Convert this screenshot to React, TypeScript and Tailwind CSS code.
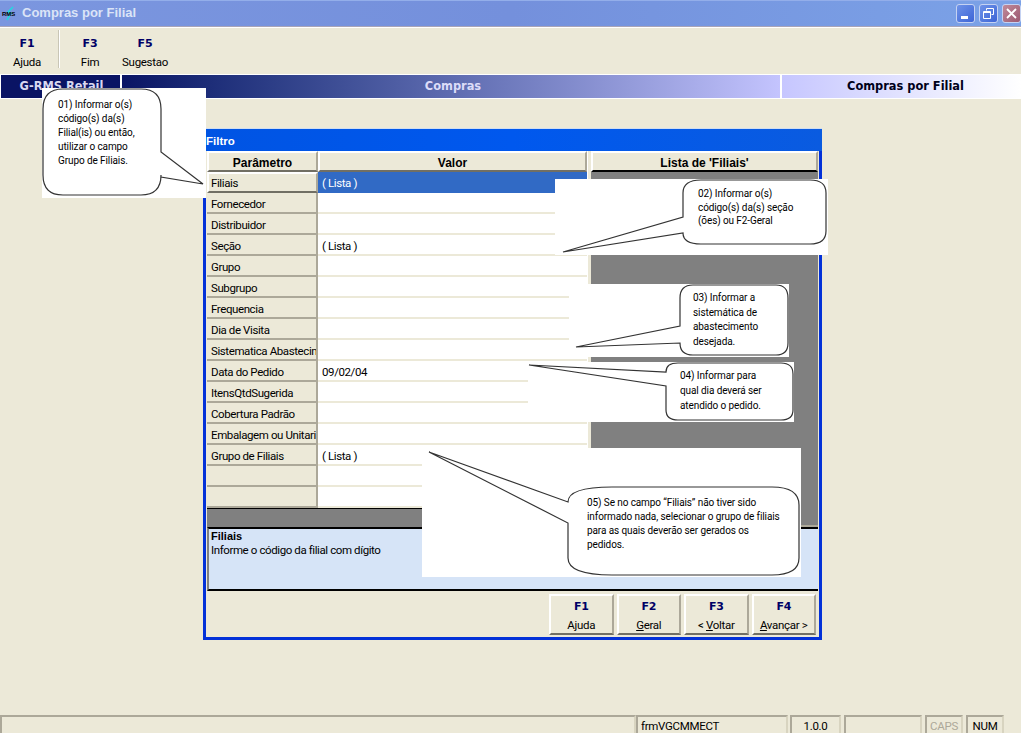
const body = { fontFamily: 'Roboto, "Liberation Sans", Arial, sans-serif' };
const bold = { fontFamily: '"Liberation Sans", Arial, sans-serif' };
const heavy = { fontFamily: '"DejaVu Sans", sans-serif' };

const rows = [
  { label: 'Filiais', value: '( Lista )', selected: true },
  { label: 'Fornecedor', value: '' },
  { label: 'Distribuidor', value: '' },
  { label: 'Seção', value: '( Lista )' },
  { label: 'Grupo', value: '' },
  { label: 'Subgrupo', value: '' },
  { label: 'Frequencia', value: '' },
  { label: 'Dia de Visita', value: '' },
  { label: 'Sistematica Abastecimento', value: '' },
  { label: 'Data do Pedido', value: '09/02/04' },
  { label: 'ItensQtdSugerida', value: '' },
  { label: 'Cobertura Padrão', value: '' },
  { label: 'Embalagem ou Unitario', value: '' },
  { label: 'Grupo de Filiais', value: '( Lista )' },
  { label: '', value: '' },
  { label: '', value: '' },
];

function Raised({ className = '', children }: { className?: string; children?: React.ReactNode }) {
  return (
    <div className={`border-t-2 border-l-2 border-t-white border-l-white border-b-2 border-r-2 border-b-[#716f64] border-r-[#aca899] bg-[#ece9d8] ${className}`}>
      {children}
    </div>
  );
}

function GridRow({ label, value, selected }: { label: string; value: string; selected?: boolean }) {
  return (
    <div className="flex h-[21px] text-[11.5px] tracking-[-0.4px] text-black">
      {selected ? (
        <Raised className="w-[111px] shrink-0 flex items-center pl-[2px] pt-[2px] overflow-hidden whitespace-nowrap">{label}</Raised>
      ) : (
        <div className="w-[111px] shrink-0 flex items-center pl-[4px] pt-[4px] overflow-hidden whitespace-nowrap bg-[#ece9d8] border-b-2 border-r-2 border-b-[#aca899] border-r-[#aca899]">
          <span className="block w-[105px] overflow-hidden">{label}</span>
        </div>
      )}
      <div className={`flex-1 flex items-center pl-[4px] pt-[4px] border-b-2 ${selected ? 'bg-[#316ac5] text-white border-b-[#316ac5]' : 'bg-white border-b-[#ece9d8]'}`}>
        {value}
      </div>
    </div>
  );
}

function FootButton({ fkey, children }: { fkey: string; children: React.ReactNode }) {
  return (
    <Raised className="w-[64.5px] h-[41px] flex flex-col items-center justify-center pt-[3px] text-[11.5px] tracking-[-0.3px] text-black leading-[18px]">
      <span className="font-bold text-[#000066] text-[11px]" style={heavy}>{fkey}</span>
      <span>{children}</span>
    </Raised>
  );
}

function ToolButton({ fkey, label, className }: { fkey: string; label: string; className: string }) {
  return (
    <div className={`flex flex-col items-center gap-[4px] pt-[9px] ${className}`}>
      <span className="font-bold text-[#000066] text-[11px] leading-[14px]" style={heavy}>{fkey}</span>
      <span className="text-[11.5px] tracking-[-0.3px] leading-[14px] text-black">{label}</span>
    </div>
  );
}

function Callout({ className, d, lines, textClass }: { className: string; d: string; lines: string[]; textClass: string }) {
  return (
    <div className={`absolute bg-white ${className}`}>
      <svg className="absolute inset-0 w-full h-full">
        <path d={d} fill="white" stroke="#333333" strokeWidth="1.2" />
      </svg>
      <div className={`absolute text-[10px] tracking-[-0.1px] text-black whitespace-nowrap ${textClass}`}>
        {lines.map((line) => (
          <div key={line}>{line}</div>
        ))}
      </div>
    </div>
  );
}

function StatusCell({ className = '', children }: { className?: string; children?: React.ReactNode }) {
  return (
    <div className={`h-[18px] border-t-2 border-l-2 border-r-2 border-t-[#aca899] border-l-[#aca899] border-r-[#d8d4c0] pt-[3px] text-[11.5px] tracking-[-0.3px] flex items-center ${className}`}>
      {children}
    </div>
  );
}

export default function App() {
  return (
    <div className="relative w-[1021px] h-[733px] overflow-hidden flex flex-col bg-[#ece9d8]" style={body}>
      {/* Title bar */}
      <div className="h-[27px] shrink-0 flex items-center bg-gradient-to-r from-[#7b96df] via-[#7490dc] to-[#7ba2e7] border-t border-t-[#93aeea] border-b border-b-[#a9a5b8]">
        <div className="relative w-[20px] h-[16px] ml-[2px] shrink-0">
          <svg viewBox="0 0 18 16" className="absolute inset-0 w-[18px] h-[16px]">
            <path d="M11 1 L6 6 L9 7 L5 14" fill="none" stroke="#22d8e0" strokeWidth="1.6" />
          </svg>
          <span className="absolute left-0 top-[5px] text-[6px] leading-[7px] font-bold text-black" style={bold}>RMS</span>
        </div>
        <span className="text-[13px] font-bold text-[#dbe4f7] -mt-[1px]" style={bold}>Compras por Filial</span>
        <div className="ml-auto flex gap-[4px] h-[19px]">
          <div className="w-[19px] h-[19px] rounded-[3px] border border-[#c5d2f2] bg-gradient-to-br from-[#6f93e8] to-[#3e64d6] flex items-end pl-[4px] pb-[3px]">
            <div className="w-[7px] h-[3px] bg-white" />
          </div>
          <div className="w-[19px] h-[19px] rounded-[3px] border border-[#c5d2f2] bg-gradient-to-br from-[#6f93e8] to-[#3e64d6] flex items-center justify-center">
            <svg viewBox="0 0 11 11" className="w-[11px] h-[11px]">
              <path d="M3.5 2.5V0.5H10.5V6.5H8.5M0.5 3.5H7.5V10.5H0.5Z M0.5 4.5H7.5" fill="none" stroke="white" strokeWidth="1" />
            </svg>
          </div>
          <div className="w-[19px] h-[19px] rounded-[3px] border border-[#c5d2f2] bg-gradient-to-br from-[#c08a9a] to-[#9c5a72] flex items-center justify-center">
            <svg viewBox="0 0 11 11" className="w-[11px] h-[11px]">
              <path d="M1 1L10 10M10 1L1 10" fill="none" stroke="white" strokeWidth="1.8" />
            </svg>
          </div>
        </div>
      </div>

      {/* Toolbar */}
      <div className="h-[47px] shrink-0 flex border-t border-t-white">
        <ToolButton fkey="F1" label="Ajuda" className="w-[54px]" />
        <div className="w-[2px] h-[38px] mt-[2px] ml-[4px] bg-[#c9c6b6] border-r border-r-white" />
        <ToolButton fkey="F3" label="Fim" className="w-[56px] ml-[2px]" />
        <ToolButton fkey="F5" label="Sugestao" className="w-[54px]" />
      </div>

      {/* Band */}
      <div className="h-[25px] shrink-0 flex border-t border-b border-t-white border-b-white text-[11.4px] font-bold" style={heavy}>
        <div className="w-[120px] bg-[#0a1464] text-[#d8d8f0] flex justify-center items-center pt-[1px] pl-[2px] border-l border-l-white">G-RMS Retail</div>
        <div className="flex-1 border-l-2 border-l-white bg-gradient-to-r from-[#0a1464] to-[#c4c4fe] text-[#dcdcf8] flex justify-center items-center pt-[1px] pl-[4px]">Compras</div>
        <div className="w-[241px] border-l-2 border-l-white bg-gradient-to-r from-[#c6c6ff] to-white text-[#00001a] flex justify-center items-center pt-[1px] pl-[8px]">Compras por Filial</div>
      </div>

      {/* Desktop area */}
      <div className="flex-1 pl-[203px] pt-[29px]">
        {/* Filtro dialog */}
        <div className="w-[619px] h-[512px] flex flex-col border-[3px] border-t-0 border-[#0331d8] bg-[#ece9d8]">
          <div className="h-[23px] -mx-[3px] shrink-0 flex items-center pl-[3px] pt-[4px] bg-gradient-to-r from-[#0054e3] via-[#0058ee] to-[#0a5be0] border-t border-t-[#d0ddf0] text-white text-[11.5px] font-bold" style={bold}>
            Filtro
          </div>
          <div className="flex px-[1px] h-[376px]">
            {/* Grid */}
            <div className="w-[380px] shrink-0 flex flex-col bg-[#808080]">
              <div className="flex h-[21px] font-bold text-[12px]" style={bold}>
                <Raised className="w-[111px] flex items-center justify-center pt-[2px]">Parâmetro</Raised>
                <Raised className="flex-1 flex items-center justify-center pt-[2px]">Valor</Raised>
              </div>
              {rows.map((row, i) => (
                <GridRow key={i} label={row.label} value={row.value} selected={row.selected} />
              ))}
              <div className="flex-1 border-t border-t-black" />
            </div>
            <div className="w-[4px] shrink-0 bg-[#ece9d8] border-l border-l-white" />
            {/* Lista */}
            <div className="flex-1 flex flex-col bg-[#808080] border-b-2 border-b-[#aca899]">
              <Raised className="h-[21px] flex items-center justify-center pt-[2px] font-bold text-[12px] border-b-black"><span style={bold}>Lista de 'Filiais'</span></Raised>
            </div>
          </div>
          {/* Help panel */}
          <div className="mx-[1px] h-[64px] shrink-0 bg-[#d6e4f7] border-t-2 border-l-2 border-t-black border-l-[#808080] border-b-2 border-b-black pl-[2px] text-[11.5px] tracking-[-0.4px] leading-[14px] text-black">
            <div className="font-bold text-[11px] tracking-normal" style={bold}>Filiais</div>
            <div>Informe o código da filial com dígito</div>
          </div>
          {/* Footer */}
          <div className="flex-1 flex justify-end gap-[3px] pr-[3px] pt-[3px]">
            <FootButton fkey="F1">Ajuda</FootButton>
            <FootButton fkey="F2"><u>G</u>eral</FootButton>
            <FootButton fkey="F3">&lt; <u>V</u>oltar</FootButton>
            <FootButton fkey="F4"><u>A</u>vançar &gt;</FootButton>
          </div>
        </div>
      </div>

      {/* Status bar */}
      <div className="h-[18px] shrink-0 flex">
        <StatusCell className="w-[636px] border-l-0" />
        <StatusCell className="w-[152px] ml-0 pl-[3px]">frmVGCMMECT</StatusCell>
        <StatusCell className="w-[51px] ml-[2px] justify-center">1.0.0</StatusCell>
        <StatusCell className="w-[78px] ml-[3px]" />
        <StatusCell className="w-[38px] ml-[3px] justify-center text-[#aca899]">CAPS</StatusCell>
        <StatusCell className="w-[38px] ml-[3px] justify-center">NUM</StatusCell>
      </div>

      {/* Callouts */}
      <Callout
        className="left-[42px] top-[88px] w-[164px] h-[110px]"
        d="M21 1 H99 Q119 1 119 21 V64 L161 96 L119 89 V87 Q119 107 99 107 H21 Q1 107 1 87 V21 Q1 1 21 1 Z"
        lines={['01) Informar o(s)', 'código(s) da(s)', 'Filial(is) ou então,', 'utilizar o campo', 'Grupo de Filiais.']}
        textClass="left-[16px] top-[10px] leading-[14px]"
      />
      <Callout
        className="left-[555px] top-[179px] w-[273px] h-[76px]"
        d="M146 1 H255 Q271 1 271 14 V52 Q271 65 255 65 H146 Q128 65 128 54 L8 73 L128 38 V14 Q128 1 146 1 Z"
        lines={['02) Informar o(s)', 'código(s) da(s) seção', '(ões) ou F2-Geral']}
        textClass="left-[143px] top-[8px] leading-[13.5px]"
      />
      <Callout
        className="left-[569px] top-[284px] w-[220px] h-[73px]"
        d="M124 1 H207 Q219 1 219 14 V59 Q219 71 207 71 H124 Q111 71 111 59 L7 63 L111 42 V14 Q111 1 124 1 Z"
        lines={['03) Informar a', 'sistemática de', 'abastecimento', 'desejada.']}
        textClass="left-[124px] top-[7px] leading-[14.5px]"
      />
      <Callout
        className="left-[528px] top-[362px] w-[266px] h-[60px]"
        d="M150 1 H253 Q265 1 265 12 V48 Q265 58 253 58 H150 Q138 58 138 48 V24 L1 3 L138 10 Q138 1 150 1 Z"
        lines={['04) Informar para', 'qual dia deverá ser', 'atendido o pedido.']}
        textClass="left-[152px] top-[6px] leading-[15px]"
      />
      <Callout
        className="left-[422px] top-[448px] w-[379px] h-[129px]"
        d="M190 39 H350 Q377 39 377 57 V110 Q377 127 350 127 H190 Q146 127 146 110 V75 L7 4 L146 54 Q146 39 190 39 Z"
        lines={['05) Se no campo “Filiais” não tiver sido', 'informado nada, selecionar o grupo de filiais', 'para as quais deverão ser gerados os', 'pedidos.']}
        textClass="left-[165px] top-[48px] leading-[14px]"
      />
    </div>
  );
}
